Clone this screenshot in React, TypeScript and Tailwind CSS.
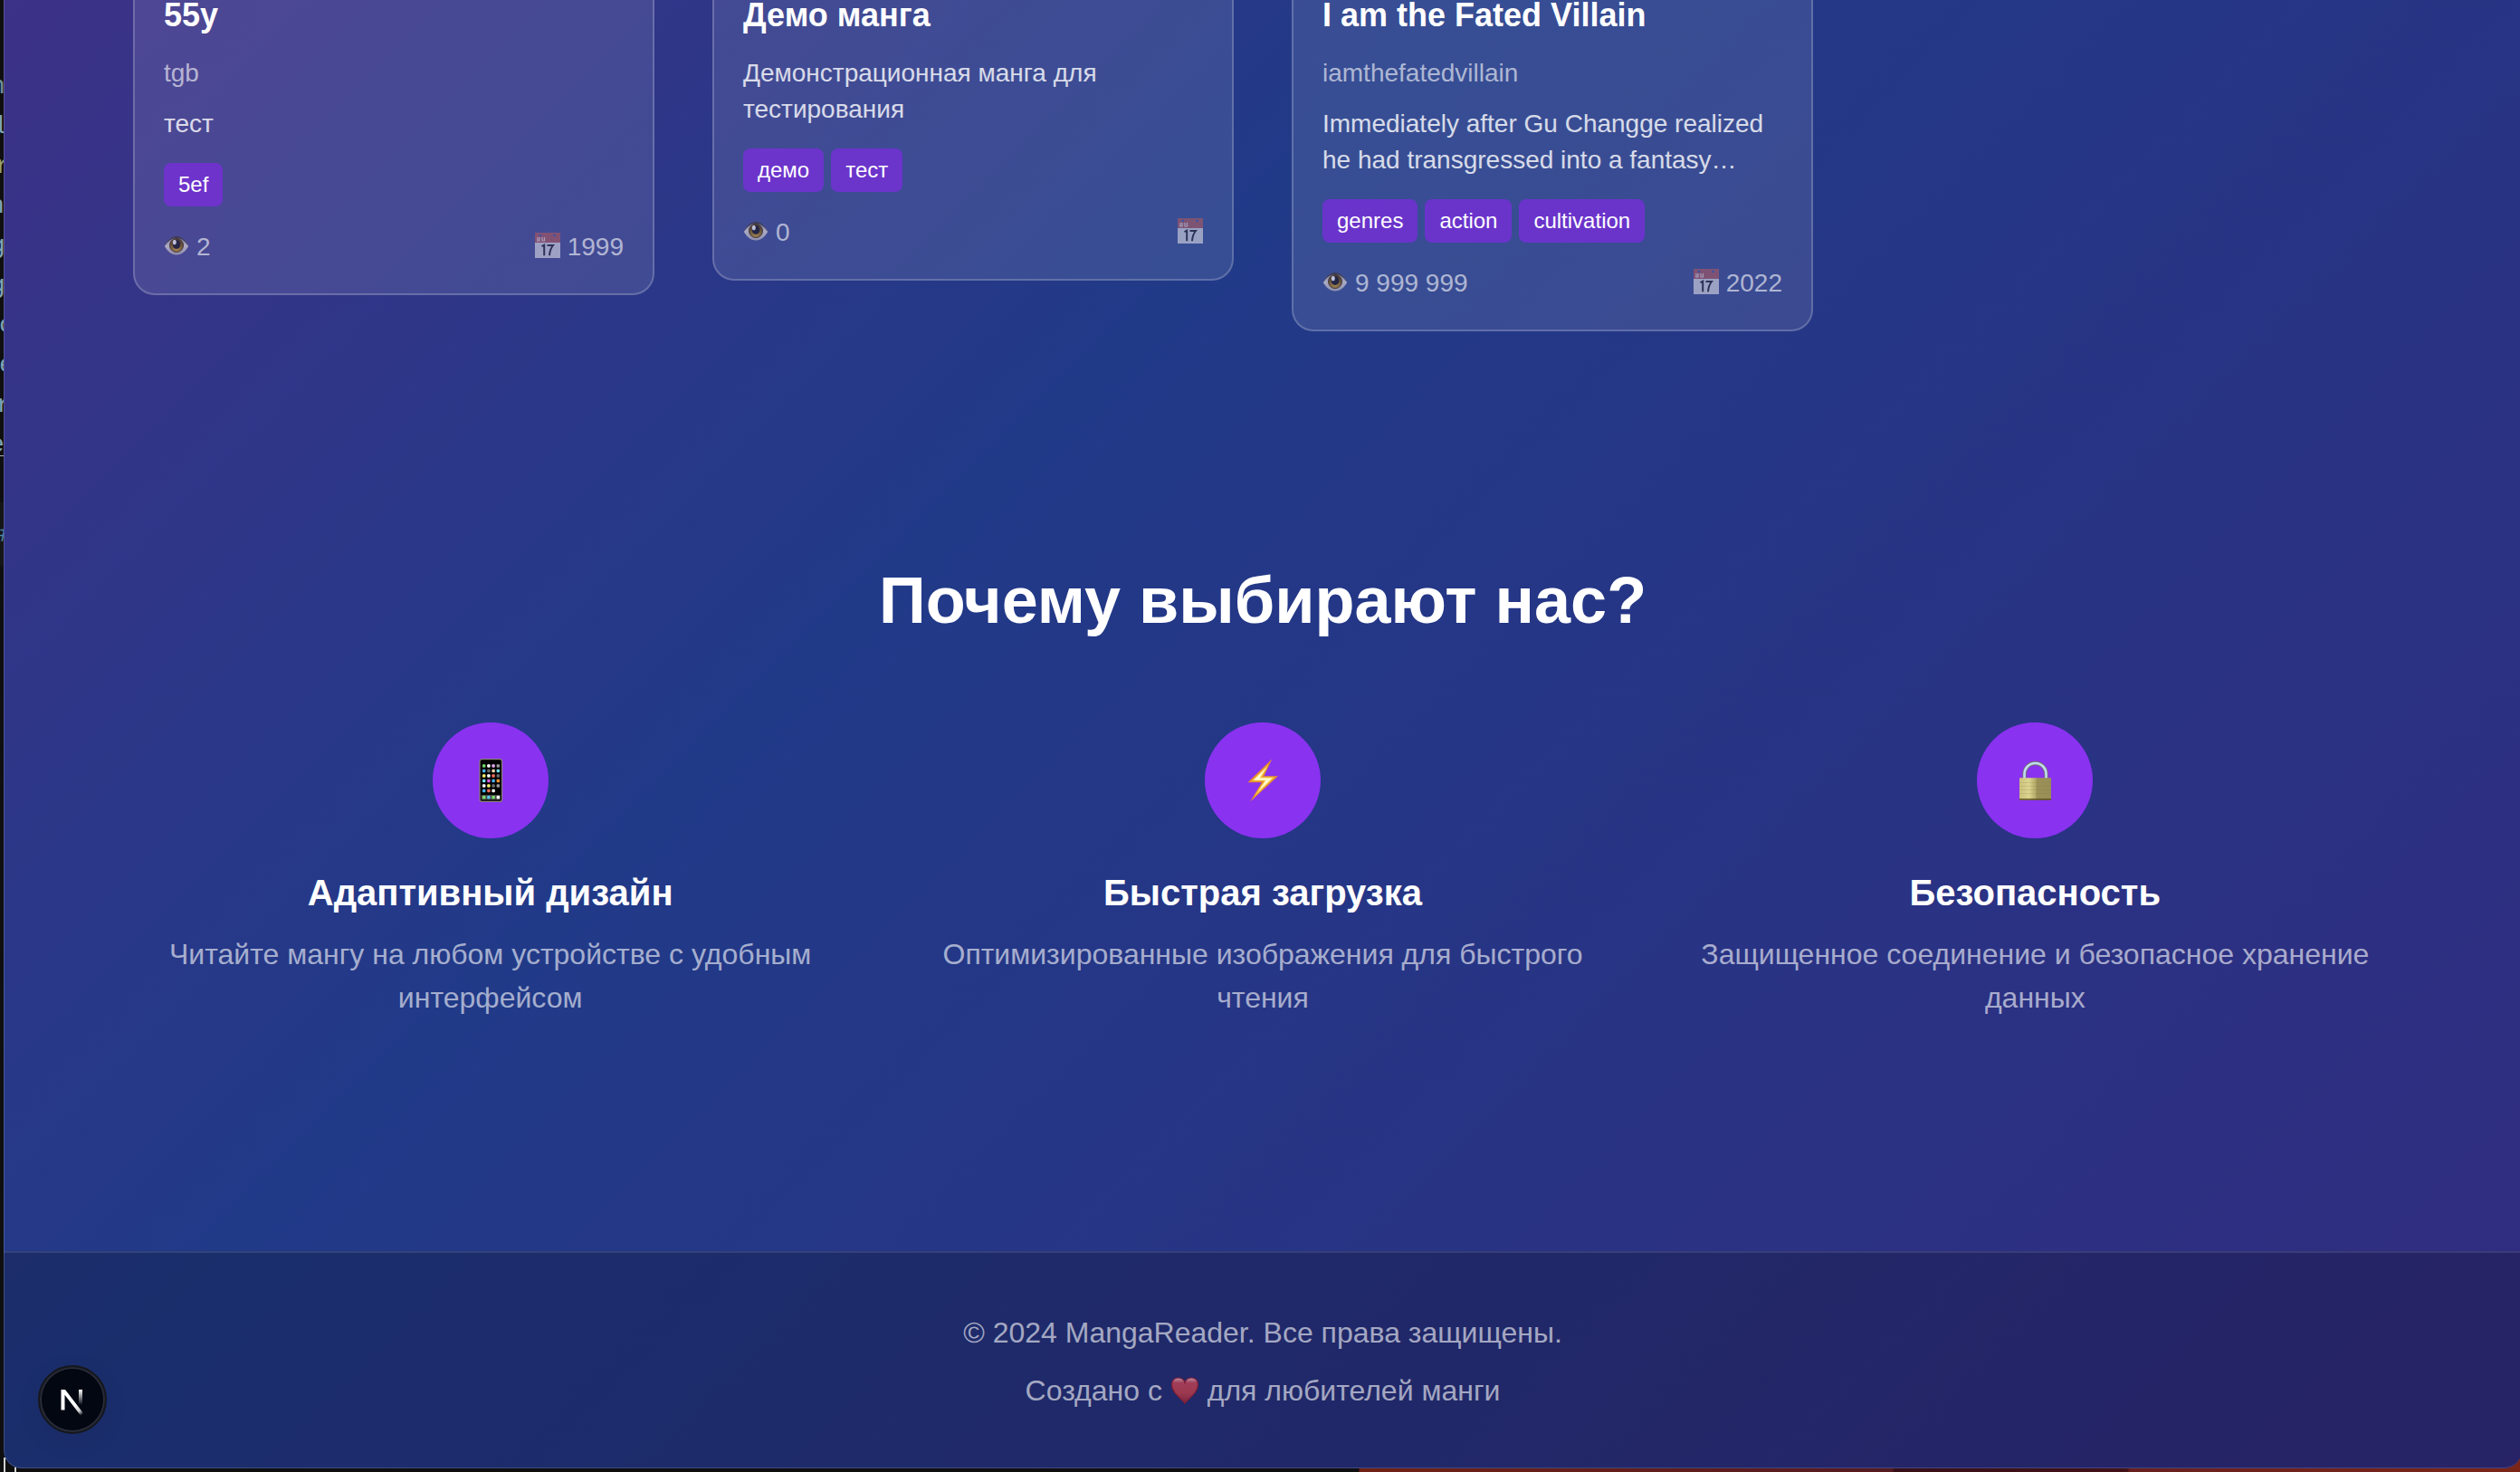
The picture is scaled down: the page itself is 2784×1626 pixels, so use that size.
import React from "react";

type Manga = { title: string; author?: string; description: string; genres: string[]; views: string; year?: string };

const mangas: Manga[] = [
  { title: "55y", author: "tgb", description: "тест", genres: ["5ef"], views: "2", year: "1999" },
  { title: "Демо манга", description: "Демонстрационная манга для тестирования", genres: ["демо", "тест"], views: "0" },
  {
    title: "I am the Fated Villain",
    author: "iamthefatedvillain",
    description: "Immediately after Gu Changge realized he had transgressed into a fantasy…",
    genres: ["genres", "action", "cultivation"],
    views: "9 999 999",
    year: "2022",
  },
];

const EyeIcon = () => (
  <svg viewBox="0 0 28 28" className="mr-2 h-7 w-7 shrink-0">
    <defs>
      <linearGradient id="eyeWhite" x1="0" y1="0" x2="0" y2="1">
        <stop offset="0" stopColor="#8d8892" />
        <stop offset="0.5" stopColor="#cfcbd6" />
        <stop offset="1" stopColor="#aaa4b4" />
      </linearGradient>
      <radialGradient id="eyeIris" cx="0.5" cy="0.75" r="0.7">
        <stop offset="0" stopColor="#c79a3d" />
        <stop offset="1" stopColor="#4d3410" />
      </radialGradient>
    </defs>
    <path d="M.8 14C4 7.500 8.500 3.200 14 3.200s10 4.300 13.200 10.800C24 19.500 20 23.500 14 23.500S4 19.500.8 14z" fill="url(#eyeWhite)" />
    <path d="M.8 14C4 7 8.500 3 14 3s10 4 13.200 11C23 8 19 5 14 5S5 8 .8 14z" fill="#3b3444" />
    <circle cx="14" cy="13" r="7.600" fill="url(#eyeIris)" stroke="#3a2b1c" strokeWidth="0.8" />
    <ellipse cx="14" cy="12" rx="4.400" ry="5" fill="#1d1a2c" />
    <ellipse cx="11.800" cy="9.500" rx="2" ry="2.700" fill="#e9e9f5" />
  </svg>
);

const CalendarIcon = () => (
  <svg viewBox="0 0 28 28" className="h-7 w-7 shrink-0">
    <rect width="28" height="28" fill="#dcdbe4" />
    <rect width="28" height="11" fill="#ad585f" />
    <path d="M3 5v3.500M5 5v4H2M8 5v3.500M10.500 5v4H7.500" stroke="#e9d4da" strokeWidth="1.200" fill="none" />
    <circle cx="6" cy="3" r="1.300" fill="#3158b8" />
    <circle cx="21.500" cy="3" r="1.300" fill="#3158b8" />
    <path d="M7.500 15.200l2.700-1.500v11.500M13.500 14h6.500c-2.400 3-3.700 6.500-4 11.200" fill="none" stroke="#22222f" strokeWidth="2" />
  </svg>
);

const HeartIcon = () => (
  <svg viewBox="0 0 32 32" className="inline-block h-8 w-8 align-[-5px] opacity-75">
    <defs>
      <linearGradient id="heartFill" x1="0" y1="0" x2="0" y2="1">
        <stop offset="0" stopColor="#f0b5bd" />
        <stop offset="0.2" stopColor="#cc4450" />
        <stop offset="0.6" stopColor="#c63f48" />
        <stop offset="1" stopColor="#98202e" />
      </linearGradient>
    </defs>
    <path
      d="M16 30C11 24 1.500 18 1.500 9.500C1.500 5 4.500 2 8.500 2C12 2 15 4 16 7.500C17 4 20 2 23.500 2C27.500 2 30.500 5 30.500 9.500C30.500 18 21 24 16 30z"
      fill="url(#heartFill)"
      stroke="#a01c27"
      strokeWidth="1.200"
    />
  </svg>
);

const appColors = [
  ["#6fdc6a", "#ffffff", "#e6a8f0", "#9a9a9a"],
  ["#48b4f5", "#6b6b6b", "#ecd2ae", "#6fe0f0"],
  ["#f7ef6c", "#ffffff", "#f0705f", "#6b6b6b"],
  ["#6fe0f0", "#df62e0", "#48b4f5", "#f79431"],
  ["#ffffff", "#f7ef6c", "#6b6b6b", "#9a9a9a"],
  ["#48b4f5", "#f0705f", "#ffffff", "#000000"],
];

const PhoneIcon = () => (
  <svg viewBox="0 0 48 48" className="h-12 w-12">
    <rect x="12" y="0.600" width="24.600" height="46.800" rx="2.500" fill="#000" stroke="#8a8078" strokeWidth="1.200" />
    <rect x="13.500" y="40" width="21.600" height="5.500" fill="#4a4a4a" />
    {appColors.map((row, r) =>
      row.map((c, i) => <rect key={`${r}-${i}`} x={15 + i * 5.2} y={6.3 + r * 5.5} width="3.400" height="3.400" rx="0.900" fill={c} />)
    )}
    {["#7ae06c", "#58c4f0", "#7ae06c", "#ffffff"].map((c, i) => (
      <rect key={i} x={15 + i * 5.2} y="41" width="3.400" height="3.400" rx="0.900" fill={c} />
    ))}
  </svg>
);

const BoltIcon = () => (
  <svg viewBox="0 0 48 48" className="h-12 w-12">
    <path d="M34.200 0.500L7.500 26.200H23L10.200 47.500L41 19.200H25.500z" fill="#e8912a" />
    <path d="M30.500 6.500L12 24.600H26L14.500 42L37 20.600H22.500z" fill="#f9cf55" />
    <path d="M28.500 9.500L14 23.700H27.500L19 36.500L34.500 21.600H20.500z" fill="#fffbd0" />
  </svg>
);

const LockIcon = () => (
  <svg viewBox="0 0 48 48" className="h-12 w-12">
    <defs>
      <linearGradient id="lockBody" x1="0" x2="1" y1="0" y2="0">
        <stop offset="0" stopColor="#c9c07c" />
        <stop offset="0.300" stopColor="#dcd590" />
        <stop offset="0.500" stopColor="#b5ab6a" />
        <stop offset="0.550" stopColor="#9c9258" />
        <stop offset="1" stopColor="#978d56" />
      </linearGradient>
    </defs>
    <path d="M12.500 22V17a12 12 0 0 1 24 0v5" fill="none" stroke="#77716f" strokeWidth="4.400" />
    <path d="M12.500 22V17a12 12 0 0 1 24 0v5" fill="none" stroke="#bfdcf0" strokeWidth="2.600" />
    <rect x="7" y="21.300" width="35" height="24.500" rx="1" fill="url(#lockBody)" />
    <path d="M7.500 26.500h34M7.500 30.500h34M7.500 34.500h34M7.500 38.500h34" stroke="#7d7440" strokeOpacity="0.250" strokeWidth="0.700" />
    <path d="M7 45h35" stroke="#5b4d20" strokeWidth="1.500" />
  </svg>
);

const NextBadge = () => (
  <div className="absolute left-[38px] top-[1508px] flex h-[76px] w-[76px] items-center justify-center rounded-full border-2 border-[#15171c] bg-[#030712] shadow-[0_8px_32px_rgba(0,0,0,0.06)]">
    <div className="flex h-[72px] w-[72px] items-center justify-center rounded-full border-2 border-[#292c38]">
      <svg viewBox="0 0 76 76" className="h-[76px] w-[76px] shrink-0" fill="none">
        <defs>
          <linearGradient id="nDiagonal" gradientUnits="userSpaceOnUse" x1="40" y1="44" x2="49" y2="55">
            <stop stopColor="#fff" />
            <stop offset="0.604" stopColor="#fff" stopOpacity="0.800" />
            <stop offset="1" stopColor="#fff" stopOpacity="0" />
          </linearGradient>
          <linearGradient id="nStem" gradientUnits="userSpaceOnUse" x1="47" y1="27" x2="47" y2="44">
            <stop stopColor="#fff" />
            <stop offset="1" stopColor="#fff" stopOpacity="0" />
          </linearGradient>
        </defs>
        <path d="M25.500 27H30L50 53L47 55.500L29.500 32.800V49.500H25.500z" fill="url(#nDiagonal)" />
        <path d="M45 27H49V44H45z" fill="url(#nStem)" />
      </svg>
    </div>
  </div>
);

const features = [
  { icon: <PhoneIcon />, title: "Адаптивный дизайн", text: "Читайте мангу на любом устройстве с удобным интерфейсом" },
  { icon: <BoltIcon />, title: "Быстрая загрузка", text: "Оптимизированные изображения для быстрого чтения" },
  { icon: <LockIcon />, title: "Безопасность", text: "Защищенное соединение и безопасное хранение данных" },
];

const MangaCard = ({ manga }: { manga: Manga }) => (
  <article className="rounded-b-3xl border-2 border-t-0 border-white/20 bg-white/10 px-8 pb-8">
    <h3 className="-mt-3 mb-4 translate-y-px text-[36px] font-bold leading-[56px] text-white">{manga.title}</h3>
    {manga.author && <p className="mb-4 translate-y-px text-[28px] leading-10 text-white/60">{manga.author}</p>}
    <p className="mb-6 translate-y-px text-[28px] leading-10 text-white/80">{manga.description}</p>
    <div className="mb-6 flex gap-2">
      {manga.genres.map((g) => (
        <span key={g} className="rounded-lg bg-[#7b2cde]/75 px-4 py-2 text-2xl leading-8 text-white">
          {g}
        </span>
      ))}
    </div>
    <div className="flex items-center justify-between text-[28px] leading-10 text-white/60">
      <span className="flex items-center">
        <span className="flex opacity-75">
          <EyeIcon />
        </span>
        <span className="translate-y-px">{manga.views}</span>
      </span>
      <span className="flex items-center gap-2">
        <span className="-mt-0.5 flex opacity-60">
          <CalendarIcon />
        </span>
        {manga.year && <span className="translate-y-px">{manga.year}</span>}
      </span>
    </div>
  </article>
);

const editorLines = [
  { text: "n", style: "-ml-[11px] text-[#6f8f99]" },
  { text: "l", style: "-ml-[8px] text-[#7fa5b5]" },
  { text: "r", style: "-ml-[5px] text-[#98a673]" },
  { text: "n", style: "-ml-[12px] text-[#7fa5b5]" },
  { text: "g", style: "-ml-[11px] text-[#7fa5b5]" },
  { text: "g", style: "-ml-[11px] text-[#7fa5b5]" },
  { text: "c", style: "-ml-[1px] text-[#7fa5b5]" },
  { text: "e", style: "-ml-[1px] text-[#7fa5b5]" },
  { text: "r", style: "-ml-[4px] text-[#7fa5b5]" },
  { text: "e", style: "-ml-[12px] text-[#7fa5b5]" },
];

export default function App() {
  return (
    <div className="relative flex h-[1626px] w-[2784px] overflow-hidden bg-[linear-gradient(90deg,#0f0f0f_0,#0f0f0f_1501px,#702115_1502px,#551a20_2090px,#380f18_2093px,#421117_2350px,#68201f_2353px,#7a2518_2784px)] font-['Liberation_Sans',Arial,sans-serif]">
      <div className="absolute bottom-0 left-1 h-4 w-3.5 border-x-2 border-t-2 border-[#d0d0d0]" />
      <div className="flex h-full w-1 shrink-0 flex-col overflow-hidden pt-[74px] font-['Liberation_Mono',monospace] text-[28px]">
        {editorLines.map((l, i) => (
          <div key={i} className="flex h-11 w-1 shrink-0 leading-[44px]">
            <span className={l.style}>{l.text}</span>
          </div>
        ))}
        <div className="-mt-[11px] h-px shrink-0 bg-[#b0b0b0]" />
        <div className="mt-[51px] flex h-[70px] w-1 shrink-0 bg-[#161616] leading-[72px] text-[#4f87a5]">
          <span className="-ml-px">#</span>
        </div>
      </div>
      <div className="relative h-[1622px] w-[2782px] shrink-0 overflow-hidden rounded-b-[20px] bg-[linear-gradient(135deg,#502c88_0%,#213a88_50%,#312c80_100%)] bg-[length:2782px_2800px] bg-bottom">
        <main className="mx-auto w-[2496px]">
          <section className="grid grid-cols-[repeat(4,576px)] items-start gap-16 pb-32">
            {mangas.map((m) => (
              <MangaCard key={m.title} manga={m} />
            ))}
          </section>
          <section className="pb-64 pt-32">
            <h2 className="mb-24 translate-y-px text-center text-7xl font-bold leading-[80px] text-white">Почему выбирают нас?</h2>
            <div className="grid grid-cols-3 gap-16">
              {features.map((f) => (
                <div key={f.title} className="text-center">
                  <div className="mx-auto mb-8 flex h-32 w-32 items-center justify-center rounded-full bg-[#8932f0]">{f.icon}</div>
                  <h3 className="mb-4 text-[40px] font-bold leading-[56px] text-white">{f.title}</h3>
                  <p className="text-[32px] leading-[48px] text-white/60">{f.text}</p>
                </div>
              ))}
            </div>
          </section>
        </main>
        <footer className="border-t-2 border-white/10 bg-black/20 py-16 text-center text-[32px] leading-[48px] text-white/60">
          <p className="mb-4">© 2024 MangaReader. Все права защищены.</p>
          <p>
            Создано с <HeartIcon /> для любителей манги
          </p>
        </footer>
        <NextBadge />
        <div className="pointer-events-none absolute inset-0 rounded-b-[20px] border-b border-l border-white/15" />
      </div>
    </div>
  );
}
